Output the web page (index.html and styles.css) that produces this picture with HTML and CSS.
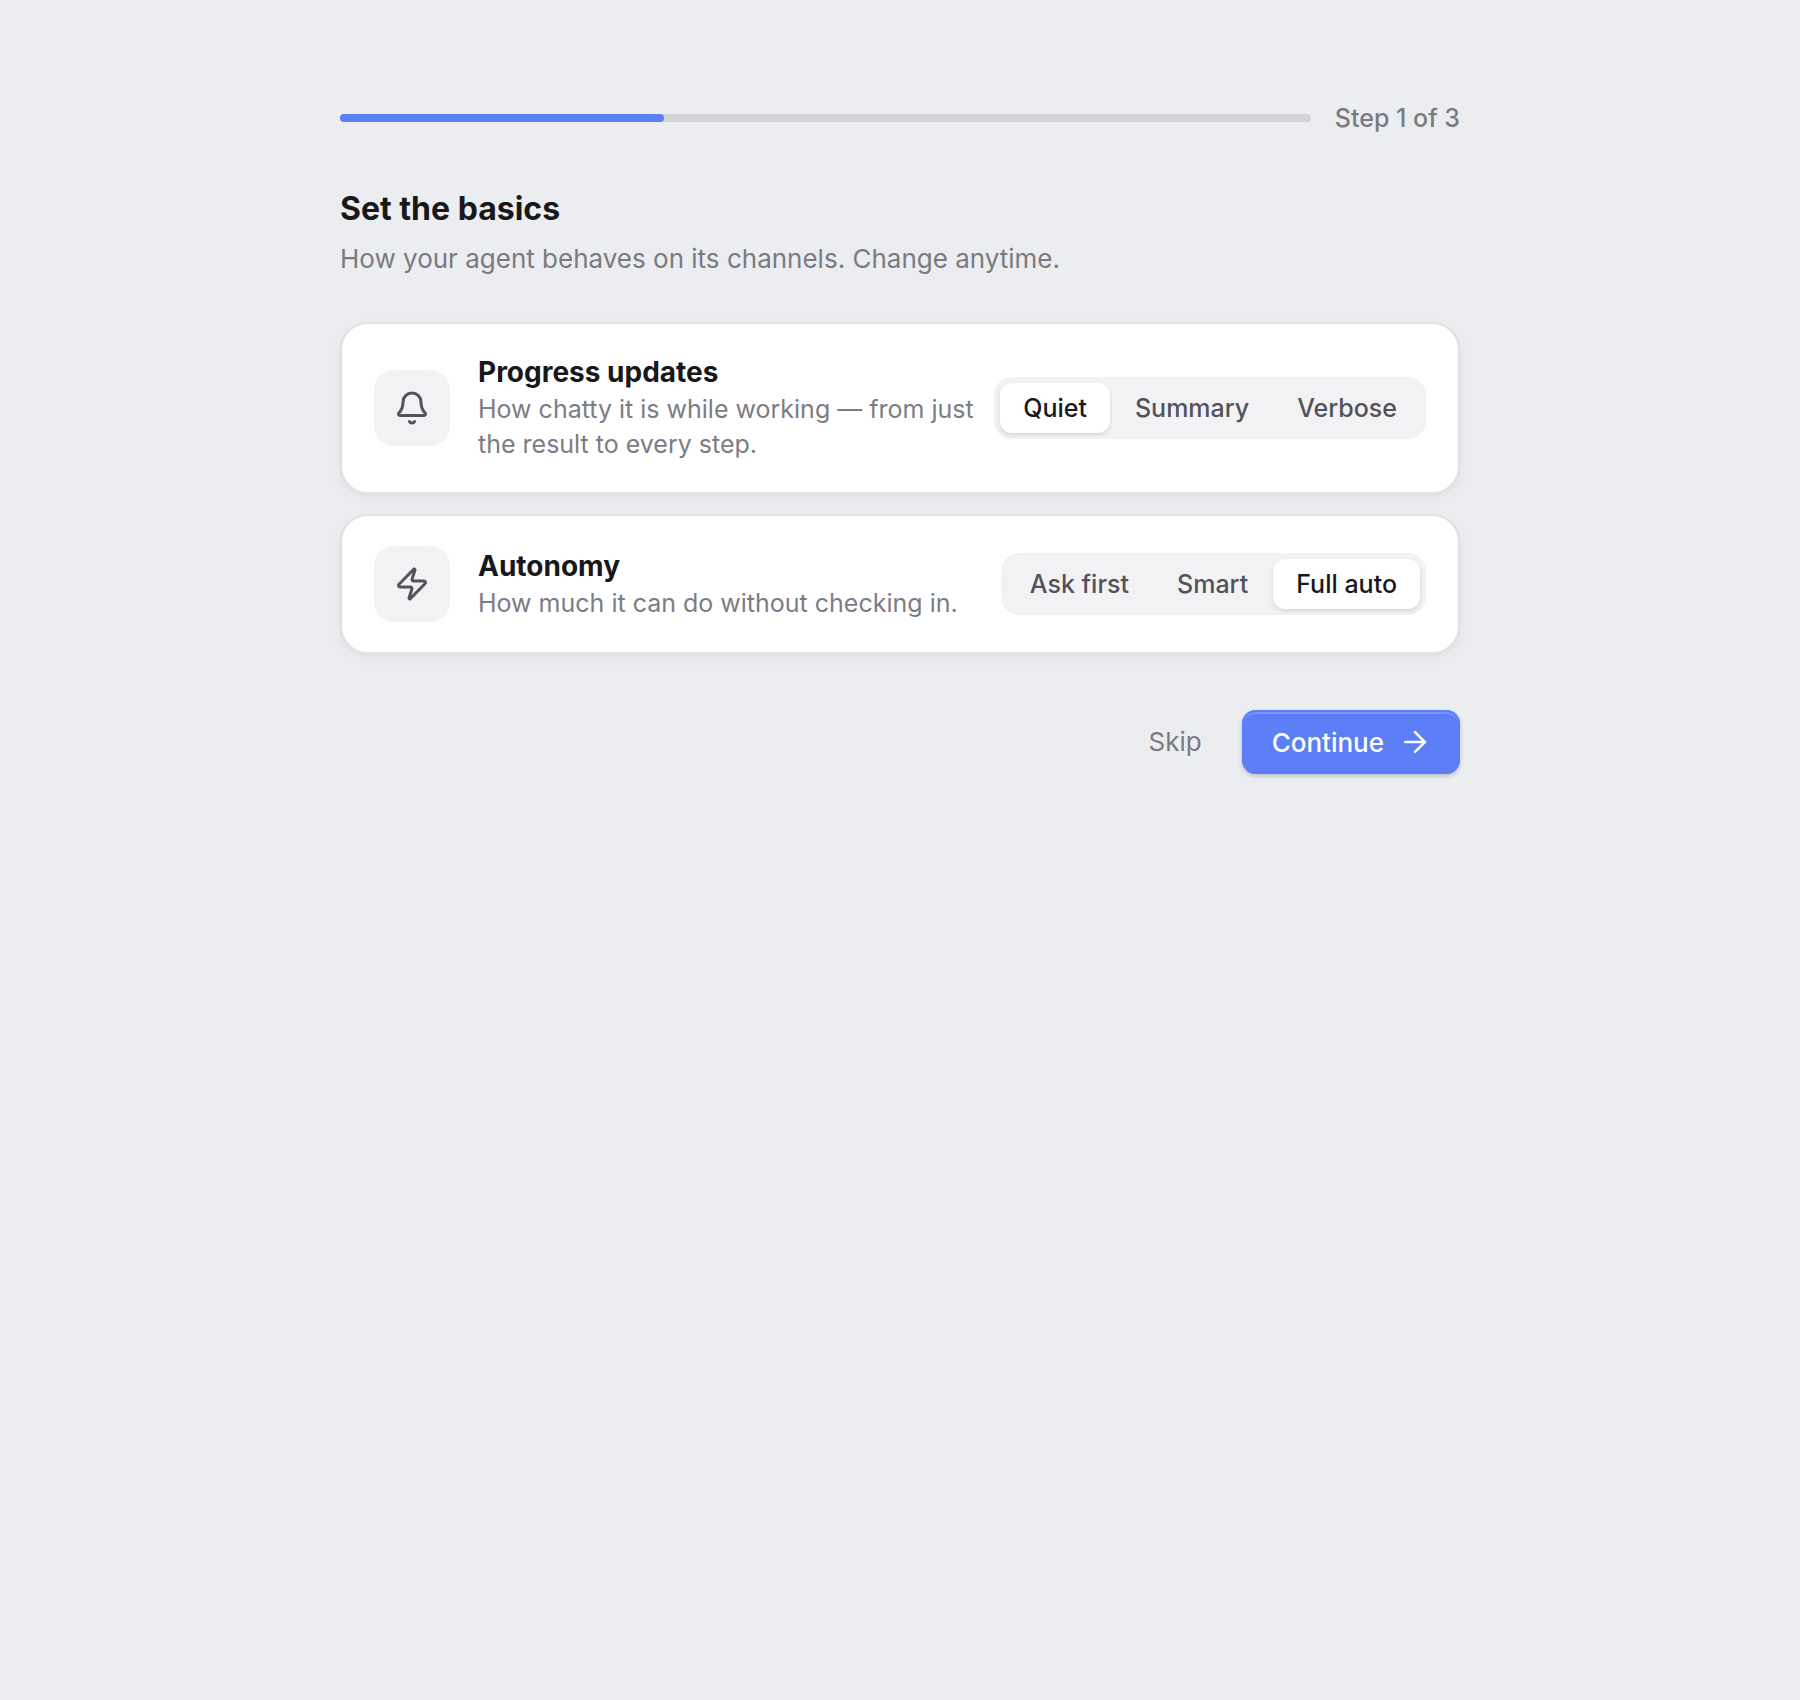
FILE: index.html
```html
<!DOCTYPE html>
<html lang="en">
<head>
<meta charset="utf-8">
<meta name="viewport" content="width=device-width, initial-scale=1">
<title>Set the basics</title>
<link rel="stylesheet" href="styles.css">
</head>
<body>
<main class="setup">
  <div class="steps">
    <div class="track" role="progressbar" aria-label="Setup progress" aria-valuemin="0" aria-valuemax="3" aria-valuenow="1">
      <div class="fill" style="width: 33.33%"></div>
    </div>
    <span class="step-label">Step 1 of 3</span>
  </div>

  <header class="intro">
    <h1 class="title">Set the basics</h1>
    <p class="subtitle">How your agent behaves on its channels. Change anytime.</p>
  </header>

  <div class="cards">
    <section class="card">
      <div class="badge">
        <svg class="icon" viewBox="0 0 24 24" aria-hidden="true"><path d="M10.268 21a2 2 0 0 0 3.464 0"/><path d="M3.262 15.326A1 1 0 0 0 4 17h16a1 1 0 0 0 .74-1.673C19.41 13.956 18 12.499 18 8A6 6 0 0 0 6 8c0 4.499-1.411 5.956-2.738 7.326"/></svg>
      </div>
      <div class="copy">
        <h2 class="name" id="updates">Progress updates</h2>
        <p class="desc">How chatty it is while working — from just the result to every step.</p>
      </div>
      <div class="segments" role="group" aria-labelledby="updates">
        <button class="segment selected" type="button" aria-pressed="true">Quiet</button>
        <button class="segment" type="button" aria-pressed="false">Summary</button>
        <button class="segment" type="button" aria-pressed="false">Verbose</button>
      </div>
    </section>

    <section class="card">
      <div class="badge">
        <svg class="icon" viewBox="0 0 24 24" aria-hidden="true"><path d="M4 14a1 1 0 0 1-.78-1.63l9.9-10.2a.5.5 0 0 1 .86.46l-1.92 6.02A1 1 0 0 0 13 10h7a1 1 0 0 1 .78 1.63l-9.9 10.2a.5.5 0 0 1-.86-.46l1.92-6.02A1 1 0 0 0 11 14z"/></svg>
      </div>
      <div class="copy">
        <h2 class="name" id="autonomy">Autonomy</h2>
        <p class="desc">How much it can do without checking in.</p>
      </div>
      <div class="segments" role="group" aria-labelledby="autonomy">
        <button class="segment" type="button" aria-pressed="false">Ask first</button>
        <button class="segment" type="button" aria-pressed="false">Smart</button>
        <button class="segment selected" type="button" aria-pressed="true">Full auto</button>
      </div>
    </section>
  </div>

  <footer class="actions">
    <button class="skip" type="button">Skip</button>
    <button class="continue" type="button">Continue
      <svg class="arrow" viewBox="0 0 24 24" aria-hidden="true"><path d="M5 12h14"/><path d="m12 5 7 7-7 7"/></svg>
    </button>
  </footer>
</main>
</body>
</html>
```
FILE: styles.css
```css
* {
  box-sizing: border-box;
}

body {
  margin: 0;
  background: #ecedf1;
  color: #18181b;
  font-family: Inter, "Liberation Sans", sans-serif;
  -webkit-font-smoothing: antialiased;
}

h1, h2, p {
  margin: 0;
}

button {
  border: 0;
  background: none;
  font-family: inherit;
  cursor: pointer;
}

.setup {
  max-width: 1168px;
  margin: 0 auto;
  padding: 100px 24px;
}

.steps {
  display: flex;
  align-items: center;
  gap: 24px;
}

.track {
  flex: 1;
  height: 8px;
  border-radius: 4px;
  background: #d2d3d7;
}

.fill {
  height: 100%;
  border-radius: 4px;
  background: #5c7ff8;
}

.step-label {
  color: #7a7b80;
  font-size: 25px;
  font-weight: 500;
  line-height: 36px;
}

.intro {
  margin-top: 50px;
}

.title {
  font-size: 32px;
  font-weight: 700;
  line-height: 46px;
}

.subtitle {
  margin-top: 8px;
  color: #7a7b80;
  font-size: 26px;
  line-height: 38px;
}

.cards {
  display: flex;
  flex-direction: column;
  gap: 20px;
  margin-top: 44px;
}

.card {
  display: flex;
  align-items: center;
  gap: 16px;
  padding: 30px 32px;
  border: 2px solid #e2e2e3;
  border-radius: 28px;
  background: #fff;
  box-shadow: 0 2px 4px rgb(0 0 0 / 4%), 0 4px 16px rgb(0 0 0 / 3%);
}

.badge {
  display: grid;
  flex: none;
  place-items: center;
  width: 76px;
  height: 76px;
  margin-right: 12px;
  border-radius: 20px;
  background: #f2f2f4;
}

.icon {
  width: 36px;
  height: 36px;
  fill: none;
  stroke: #52525b;
  stroke-width: 2;
  stroke-linecap: round;
  stroke-linejoin: round;
}

.copy {
  flex: 1;
  min-width: 0;
}

.name {
  font-size: 28px;
  font-weight: 700;
  line-height: 36px;
}

.desc {
  margin-top: 2px;
  color: #7c7c83;
  font-size: 25px;
  line-height: 35px;
}

.segments {
  display: flex;
  flex: none;
  gap: 2px;
  padding: 6px;
  border-radius: 18px;
  background: #f2f2f4;
}

.segment {
  padding: 0 23px;
  border-radius: 12px;
  color: #52525b;
  font-size: 25px;
  font-weight: 500;
  line-height: 50px;
}

.segment.selected {
  background: #fff;
  color: #18181b;
  box-shadow: 0 2px 4px rgb(0 0 0 / 12%);
}

.actions {
  display: flex;
  align-items: center;
  justify-content: flex-end;
  gap: 20px;
  margin-top: 56px;
}

.skip {
  padding: 0 20px;
  color: #7a7b80;
  font-size: 26px;
  line-height: 64px;
}

.continue {
  display: flex;
  align-items: center;
  gap: 14px;
  height: 64px;
  padding: 0 28px 0 30px;
  border-radius: 14px;
  background: #5c7ff8;
  color: #fff;
  font-size: 26px;
  font-weight: 500;
  box-shadow: inset 0 0 0 2px #5c7ff8, inset 0 4px 0 rgb(255 255 255 / 18%), 0 2px 4px rgb(0 0 0 / 20%);
}

.arrow {
  width: 34px;
  height: 34px;
  fill: none;
  stroke: currentColor;
  stroke-width: 1.75;
  stroke-linecap: round;
  stroke-linejoin: round;
}
```
